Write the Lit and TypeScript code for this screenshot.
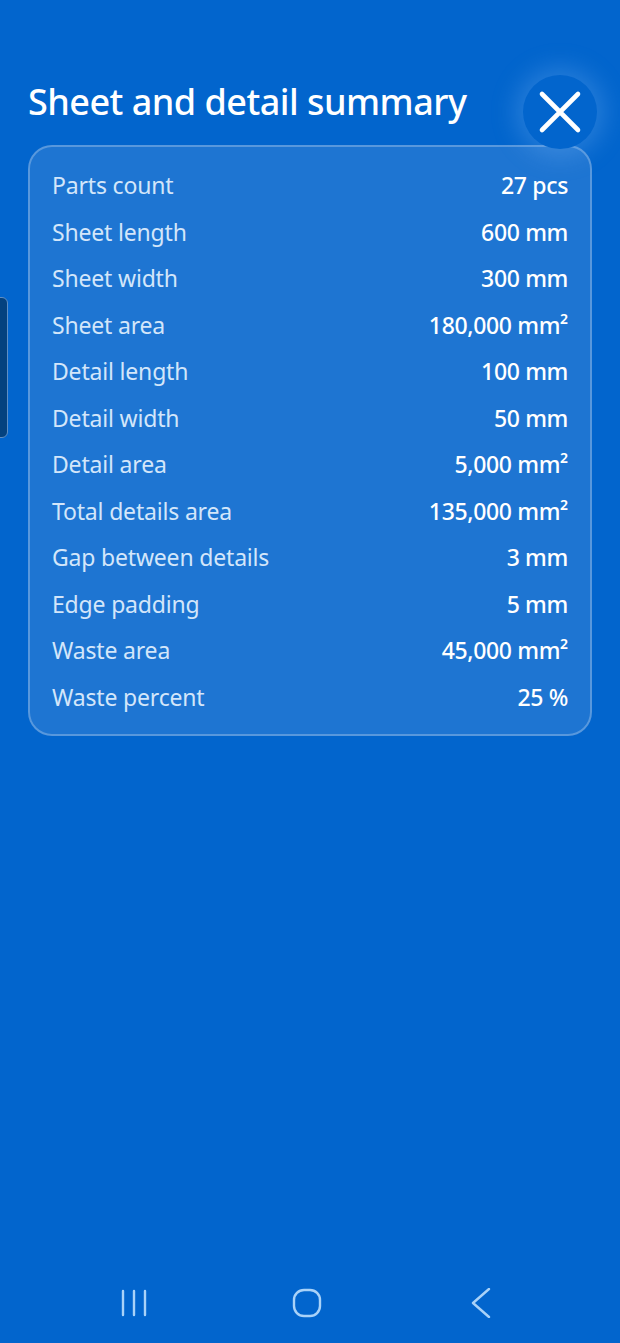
import { LitElement, css, html } from 'lit';
import { customElement } from 'lit/decorators.js';

const rows: [string, string][] = [
  ['Parts count', '27 pcs'],
  ['Sheet length', '600 mm'],
  ['Sheet width', '300 mm'],
  ['Sheet area', '180,000 mm²'],
  ['Detail length', '100 mm'],
  ['Detail width', '50 mm'],
  ['Detail area', '5,000 mm²'],
  ['Total details area', '135,000 mm²'],
  ['Gap between details', '3 mm'],
  ['Edge padding', '5 mm'],
  ['Waste area', '45,000 mm²'],
  ['Waste percent', '25 %'],
];

@customElement('app-root')
export class AppRoot extends LitElement {
  static styles = css`
    :host {
      display: flex;
      flex-direction: column;
      position: relative;
      height: 1343px;
      overflow: hidden;
      background: #0265cd;
      color: #fff;
      font-family: 'Noto Sans', sans-serif;
    }

    .title {
      margin: 0;
      padding: 77px 28px 0;
      font-size: 36px;
      line-height: 49px;
      font-weight: 500;
      letter-spacing: -0.52px;
      white-space: nowrap;
    }

    .card {
      box-sizing: border-box;
      height: 591px;
      margin: 19px 28px 0;
      padding: 15px 22px 0;
      border: 2px solid rgba(255, 255, 255, 0.26);
      border-radius: 24px;
      background: #1e75d2;
    }

    .row {
      display: flex;
      justify-content: space-between;
      height: 46.5px;
      line-height: 46.5px;
      font-size: 23px;
    }

    .label {
      color: #d3e6fa;
      letter-spacing: -0.18px;
    }

    .value {
      font-weight: 500;
      letter-spacing: -0.35px;
    }

    .close {
      position: absolute;
      left: 523px;
      top: 75px;
      width: 74px;
      height: 74px;
      border-radius: 50%;
      background: #0265cd;
      box-shadow: 0 0 24px 8px rgba(120, 180, 245, 0.3);
    }

    .close svg {
      display: block;
    }

    .handle {
      position: absolute;
      left: -6px;
      top: 297px;
      width: 12px;
      height: 139px;
      border: 1px solid #5f8fc4;
      border-radius: 6px;
      background: #04427f;
    }

    .nav {
      display: grid;
      grid-template-columns: 173px 178px 1fr;
      align-items: center;
      margin-top: auto;
      padding: 0 0 20px 119px;
      height: 40px;
    }

    .nav svg {
      display: block;
      fill: none;
      stroke: #a9d2f8;
      stroke-width: 2.4;
      stroke-linecap: round;
      stroke-linejoin: round;
    }
  `;

  render() {
    return html`
      <h1 class="title">Sheet and detail summary</h1>
      <div class="card">
        ${rows.map(([label, value]) => html`
          <div class="row">
            <span class="label">${label}</span>
            <span class="value">${value}</span>
          </div>
        `)}
      </div>
      <div class="handle"></div>
      <div class="close">
        <svg width="74" height="74" viewBox="0 0 74 74" fill="none" stroke="#fff" stroke-width="4.6" stroke-linecap="round">
          <path d="M19 19L55 55M55 19L19 55" />
        </svg>
      </div>
      <div class="nav">
        <svg width="30" height="30" viewBox="0 0 30 30">
          <path d="M4 3V27M15 3V27M26 3V27" />
        </svg>
        <svg width="30" height="30" viewBox="0 0 30 30">
          <rect x="2" y="2" width="26" height="26" rx="10" />
        </svg>
        <svg width="22" height="30" viewBox="0 0 22 30">
          <path d="M19 1L3 15L19 29" />
        </svg>
      </div>
    `;
  }
}
